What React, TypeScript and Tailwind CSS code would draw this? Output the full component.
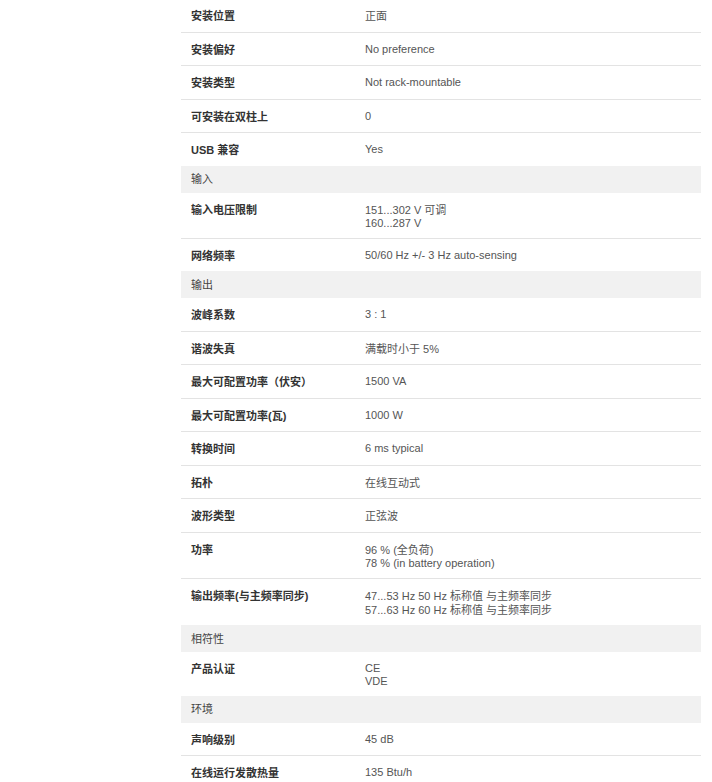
import React from 'react';

type Row =
  | { kind: 'section'; title: string }
  | { kind: 'row'; label: string; values: string[] };

const rows: Row[] = [
  { kind: 'row', label: '安装位置', values: ['正面'] },
  { kind: 'row', label: '安装偏好', values: ['No preference'] },
  { kind: 'row', label: '安装类型', values: ['Not rack-mountable'] },
  { kind: 'row', label: '可安装在双柱上', values: ['0'] },
  { kind: 'row', label: 'USB 兼容', values: ['Yes'] },
  { kind: 'section', title: '输入' },
  { kind: 'row', label: '输入电压限制', values: ['151...302 V 可调', '160...287 V'] },
  { kind: 'row', label: '网络频率', values: ['50/60 Hz +/- 3 Hz auto-sensing'] },
  { kind: 'section', title: '输出' },
  { kind: 'row', label: '波峰系数', values: ['3 : 1'] },
  { kind: 'row', label: '谐波失真', values: ['满载时小于 5%'] },
  { kind: 'row', label: '最大可配置功率（伏安）', values: ['1500 VA'] },
  { kind: 'row', label: '最大可配置功率(瓦)', values: ['1000 W'] },
  { kind: 'row', label: '转换时间', values: ['6 ms typical'] },
  { kind: 'row', label: '拓朴', values: ['在线互动式'] },
  { kind: 'row', label: '波形类型', values: ['正弦波'] },
  { kind: 'row', label: '功率', values: ['96 % (全负荷)', '78 % (in battery operation)'] },
  {
    kind: 'row',
    label: '输出频率(与主频率同步)',
    values: ['47...53 Hz 50 Hz 标称值 与主频率同步', '57...63 Hz 60 Hz 标称值 与主频率同步'],
  },
  { kind: 'section', title: '相符性' },
  { kind: 'row', label: '产品认证', values: ['CE', 'VDE'] },
  { kind: 'section', title: '环境' },
  { kind: 'row', label: '声响级别', values: ['45 dB'] },
  { kind: 'row', label: '在线运行发散热量', values: ['135 Btu/h'] },
];

const hasCjk = (s: string) => /[\u4e00-\u9fff]/.test(s);

export default function App() {
  return (
    <div
      className="h-[782px] bg-white text-[11px] overflow-hidden"
      style={{ fontFamily: '"Liberation Sans", Arial, "Noto Sans CJK SC", sans-serif' }}
    >
      <div className="ml-[181px] w-[520px] mt-[-1px]">
        {rows.map((r, i) => {
          if (r.kind === 'section') {
            return (
              <div
                key={i}
                className="h-[27px] bg-[#f1f1f1] pl-[10px] flex items-center text-[#444] leading-[14px]"
              >
                {r.title}
              </div>
            );
          }
          const prev = rows[i - 1];
          const border = prev && prev.kind === 'row';
          return (
            <div
              key={i}
              className={`flex pt-[10px] pb-[8.5px] ${border ? 'border-t border-[#e3e3e3]' : ''}`}
            >
              <div className="w-[184px] pl-[10px] font-bold text-[#333] leading-[14px]">
                {r.label}
              </div>
              <div className="flex-1 text-[#555]">
                {r.values.map((v, j) => (
                  <div key={j} className={hasCjk(v) ? 'leading-[14px]' : 'leading-[12.5px]'}>
                    {v}
                  </div>
                ))}
              </div>
            </div>
          );
        })}
      </div>
    </div>
  );
}
